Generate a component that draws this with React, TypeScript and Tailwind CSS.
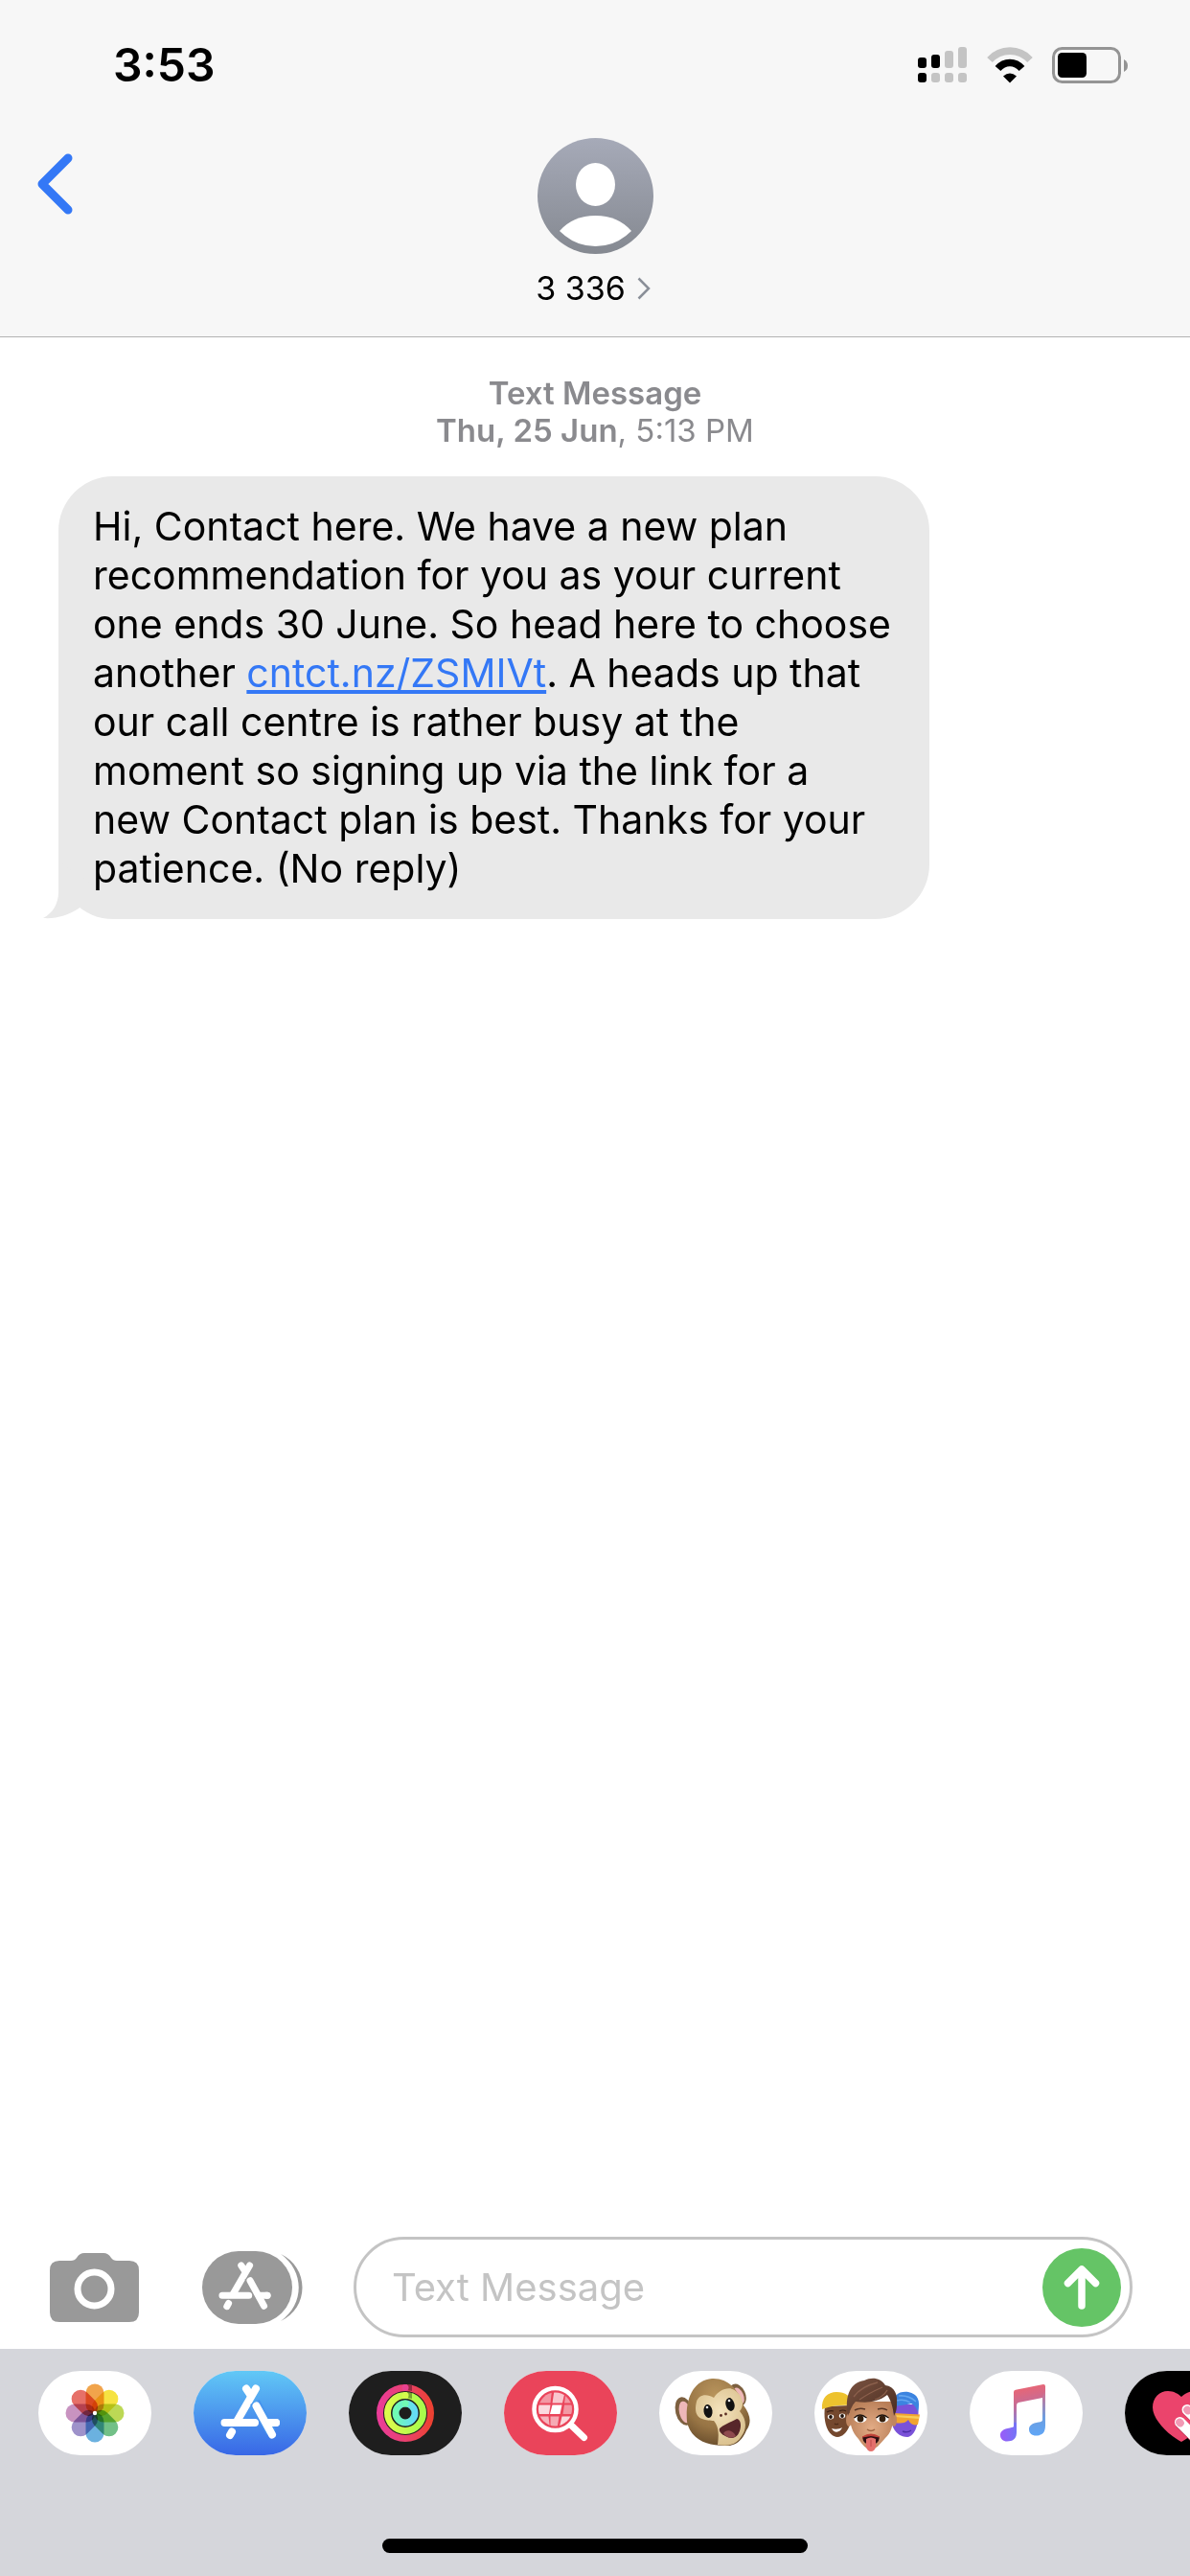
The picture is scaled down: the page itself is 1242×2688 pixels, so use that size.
import type { ReactNode } from 'react';

function StatusIcons() {
  return (
    <div className="flex items-center gap-5">
      <svg width="52" height="38" viewBox="0 0 52 38">
        <g fill="#c4c4c4">
          <rect x="14" y="27" width="9" height="10" rx="3" />
          <rect x="28" y="4" width="9" height="18" rx="3" />
          <rect x="28" y="27" width="9" height="10" rx="3" />
          <rect x="42" y="0" width="9" height="22" rx="3" />
          <rect x="42" y="27" width="9" height="10" rx="3" />
        </g>
        <rect x="0" y="11" width="9" height="11" rx="3" />
        <rect x="0" y="27" width="9" height="10" rx="3" />
        <rect x="14" y="8" width="9" height="14" rx="3" />
      </svg>
      <svg width="48" height="38" viewBox="0 0 48 38">
        <path d="M3 13.5C14.5 1 33.5 1 45 13.5" fill="none" stroke="#c4c4c4" strokeWidth="7.6" />
        <path d="M11.5 22.5C18.5 14.5 29.5 14.5 36.5 22.5" fill="none" stroke="#000" strokeWidth="7.6" />
        <path d="M17 30.5Q24 24.5 31 30.5L24 37.5Z" />
      </svg>
      <svg width="80" height="38" viewBox="0 0 80 38">
        <rect x="1.5" y="1.5" width="69" height="35" rx="9" fill="none" stroke="#949494" strokeWidth="3" />
        <rect x="6" y="6" width="30" height="26" rx="4.5" />
        <path d="M75 13Q79 15 79 19.5T75 26Z" fill="#949494" />
      </svg>
    </div>
  );
}

function StoreGlyph({ cut }: { cut: string }) {
  return (
    <g fill="none" strokeLinecap="round" strokeWidth="8">
      <path stroke="#fff" d="M4.5 40H36M56.5 40H58M27 4.5l4 6" />
      <path stroke="#fff" d="M37 4.5L17 39" />
      <path stroke="#fff" d="M12 49.5l-2 3.5" />
      <path stroke={cut} strokeWidth="11" strokeLinecap="butt" d="M36 18.5L53 50" />
      <path stroke="#fff" d="M37.5 22.5L54 52.5" />
      <path stroke="#fff" d="M50 40H58" />
    </g>
  );
}

const petals = ['#f09a37', '#f5e02e', '#b5d443', '#63b97a', '#5ba8dc', '#9486c4', '#c287b9', '#e36158'];

function PhotosIcon() {
  return (
    <svg className="h-full w-full" viewBox="0 0 118 88">
      <g className="isolate">
        {petals.map((color, i) => (
          <rect
            key={color}
            className="mix-blend-multiply"
            x="49.5"
            y="13.5"
            width="19"
            height="31"
            rx="9.5"
            fill={color}
            fillOpacity="0.9"
            transform={`rotate(${i * 45} 59 44)`}
          />
        ))}
      </g>
      <circle cx="59" cy="44" r="2.2" fill="#fff" />
    </svg>
  );
}

function StoreIcon() {
  return (
    <svg className="h-full w-full" viewBox="0 0 118 88">
      <defs>
        <linearGradient id="store" x1="0" y1="0" x2="0" y2="1">
          <stop offset="0" stopColor="#61c8f6" />
          <stop offset="1" stopColor="#3867e6" />
        </linearGradient>
      </defs>
      <rect width="118" height="88" fill="url(#store)" />
      <g transform="translate(28 14)">
        <StoreGlyph cut="#4795ee" />
      </g>
    </svg>
  );
}

function FitnessIcon() {
  return (
    <svg className="h-full w-full" viewBox="0 0 118 88">
      <defs>
        <linearGradient id="move" x1="0" x2="1">
          <stop offset="0" stopColor="#ea3c97" />
          <stop offset="0.5" stopColor="#e9416f" />
          <stop offset="1" stopColor="#ec4133" />
        </linearGradient>
        <linearGradient id="exercise" x1="0" x2="1">
          <stop offset="0" stopColor="#dcfb4c" />
          <stop offset="1" stopColor="#a8fb4c" />
        </linearGradient>
        <linearGradient id="stand" x1="0" x2="1">
          <stop offset="0" stopColor="#70fbb4" />
          <stop offset="1" stopColor="#65dcf5" />
        </linearGradient>
      </defs>
      <rect width="118" height="88" fill="#1e1e1e" />
      <g fill="none" strokeWidth="7">
        <circle cx="59" cy="44" r="26.5" stroke="url(#move)" />
        <circle cx="59" cy="44" r="18.5" stroke="url(#exercise)" />
        <circle cx="59" cy="44" r="10" stroke="url(#stand)" />
      </g>
      <path d="M61 14l5 1v6l-5-1zM61 22l5 1v6l-5-1z" fill="#000" fillOpacity="0.35" />
      <circle cx="59" cy="17.5" r="3.5" fill="#e8418f" />
      <circle cx="59" cy="25.5" r="3.5" fill="#d4fb4c" />
      <circle cx="59" cy="34" r="3.5" fill="#70fbb4" />
    </svg>
  );
}

function ImagesIcon() {
  return (
    <svg className="h-full w-full" viewBox="0 0 118 88">
      <defs>
        <clipPath id="lens">
          <circle cx="53.5" cy="40" r="17.5" />
        </clipPath>
      </defs>
      <rect width="118" height="88" fill="#ea445a" />
      <path d="M70 56.5L83.5 69.5" stroke="#fff" strokeWidth="7" strokeLinecap="round" />
      <circle cx="53.5" cy="40" r="22" fill="none" stroke="#fff" strokeWidth="4.5" />
      <g clipPath="url(#lens)" fill="#fff">
        <path opacity="0.45" d="M34 20H50L48.5 33.5H34z" />
        <path opacity="0.7" d="M52.5 20H64L61 33.5H50.5z" />
        <path opacity="0.45" d="M65 20H74V33.5H63z" />
        <path opacity="0.8" d="M34 35.5H48.5L47 45H34z" />
        <path d="M50.5 35.5H60.5L58.5 45H48z" />
        <path opacity="0.45" d="M63 35.5H74V45H61.5z" />
        <path opacity="0.6" d="M34 47.5H46.5L48 60H34z" />
        <path opacity="0.55" d="M48.5 47.5H57.5L55.5 60H48.5z" />
        <path opacity="0.8" d="M60.5 47.5H74V60H57.5z" />
      </g>
    </svg>
  );
}

function MonkeyIcon() {
  return (
    <svg className="h-full w-full" viewBox="0 0 118 88">
      <defs>
        <radialGradient id="fur" cx="0.45" cy="0.25" r="0.8">
          <stop offset="0" stopColor="#b8945c" />
          <stop offset="0.6" stopColor="#977444" />
          <stop offset="1" stopColor="#64492a" />
        </radialGradient>
        <radialGradient id="muzzle" cx="0.5" cy="0.4" r="0.7">
          <stop offset="0" stopColor="#f4e3bd" />
          <stop offset="1" stopColor="#d6bc88" />
        </radialGradient>
      </defs>
      <ellipse cx="26" cy="42" rx="9" ry="15" fill="#7d6040" transform="rotate(-14 26 42)" />
      <ellipse cx="27" cy="43" rx="6" ry="11.5" fill="#eeb7b8" transform="rotate(-14 27 43)" />
      <ellipse cx="82" cy="25" rx="8" ry="12" fill="#7d6040" transform="rotate(-24 82 25)" />
      <ellipse cx="83" cy="26" rx="5" ry="9" fill="#eeb7b8" transform="rotate(-24 83 26)" />
      <path
        d="M55 8C72 7 83 20 88 36C95 45 97 54 91 62C86 74 78 79 68 78C50 78 33 72 29 53C27 28 36 10 55 8Z"
        fill="url(#fur)"
      />
      <path
        d="M39 32C41 25 49 23 57 28C62 20 73 15 80 21C88 27 89 37 84 42C91 50 92 60 86 68C81 77 72 79 61 77C62 68 63 59 57 52C49 51 34 52 39 32Z"
        fill="url(#muzzle)"
      />
      <ellipse cx="51" cy="42" rx="4.5" ry="7" fill="#111" transform="rotate(-8 51 42)" />
      <ellipse cx="74" cy="35" rx="4.5" ry="7" fill="#111" transform="rotate(-14 74 35)" />
      <circle cx="50" cy="38" r="1.3" fill="#fff" />
      <circle cx="73" cy="31" r="1.3" fill="#fff" />
      <circle cx="64.5" cy="46.5" r="1.4" fill="#5b2d23" />
      <circle cx="69.5" cy="45" r="1.4" fill="#5b2d23" />
      <path
        d="M63 60C69 55 76 53 81 50C86 51 86 59 83 65C80 71 74 71 69 68C65 66 62 63 63 60Z"
        fill="#57262a"
      />
      <path d="M67 65C70 61 76 61 80 68C76 71 70 70 67 65Z" fill="#8f4a4e" />
    </svg>
  );
}

function MemojiIcon() {
  return (
    <svg className="h-full w-full" viewBox="0 0 118 88">
      <defs>
        <linearGradient id="hair" x1="0" y1="0" x2="1" y2="1">
          <stop offset="0" stopColor="#7b5341" />
          <stop offset="1" stopColor="#4a2d21" />
        </linearGradient>
        <radialGradient id="skin" cx="0.5" cy="0.55" r="0.6">
          <stop offset="0" stopColor="#e2ab85" />
          <stop offset="1" stopColor="#b97f58" />
        </radialGradient>
      </defs>
      {/* left: yellow beanie */}
      <path d="M11 37C9 52 13 68 24 69C35 68 40 54 38 36Z" fill="#74482e" />
      <path d="M8 40C7 28 14 22 23 22C32 22 39 26 39 36C29 35 17 36 8 40Z" fill="#edc22e" />
      <path d="M18 60C21 61 26 61 29 59C27 65 20 65 18 60Z" fill="#fff" />
      <ellipse cx="17" cy="48" rx="3.2" ry="2.4" fill="#fff" />
      <ellipse cx="29" cy="47" rx="3.2" ry="2.4" fill="#fff" />
      <circle cx="17" cy="48" r="1.9" fill="#20120b" />
      <circle cx="29" cy="47" r="1.9" fill="#20120b" />
      <path d="M13 43q4-2 7-1M26 42q4-2 7 0" fill="none" stroke="#3c2114" strokeWidth="1.2" />
      <path d="M21 55q2 1.500 4 0" fill="none" stroke="#4b2b1a" strokeWidth="1.2" />
      {/* right: blue hair and visor */}
      <path d="M82 35H108C110 52 106 68 97 69C88 69 81 62 80 50Z" fill="#7a52d8" />
      <path d="M80 38C82 25 88 21 98 22C108 24 111 31 108 43C106 38 104 35 101 34C94 36 86 36 80 38Z" fill="#3c84e0" />
      <path d="M88 26q10-1 18 6M86 31q8-2 14 2" fill="none" stroke="#65a7f0" strokeWidth="1.5" />
      <path d="M82 44L110 45.5L108 56Q101 58 98 51Q94 56 84 54Z" fill="#f2a42f" />
      <path d="M83 46L109 47.5L109 50L84 48Z" fill="#f8cd58" />
      <path d="M92 63q5 2 9-1" fill="none" stroke="#4d2fa8" strokeWidth="1.5" />
      {/* centre */}
      <ellipse cx="36" cy="51" rx="3" ry="7" fill="#c08660" />
      <ellipse cx="83" cy="51" rx="3" ry="7" fill="#c08660" />
      <path d="M37 32H82C83 49 83 62 74 70C68 77 64 82 59 82C54 82 50 77 46 71C37 62 36 50 37 32Z" fill="url(#skin)" />
      <path
        d="M35 47C31 25 38 12 52 10C60 6 69 7 74 15C84 16 87 25 86 35C86 42 84 45 83 47C82 38 80 31 76 25C65 34 52 33 43 32C39 36 37 42 35 47Z"
        fill="url(#hair)"
      />
      <path d="M41 27Q49 16 66 12M47 30Q57 23 71 17M63 30Q72 27 76 20" fill="none" stroke="#8b604c" strokeWidth="1.3" />
      <path d="M42 41q5-3 11-1M66 40q6-2 10 1" fill="none" stroke="#5a3828" strokeWidth="1.5" />
      <ellipse cx="48" cy="50" rx="6.5" ry="4" fill="#fff" />
      <ellipse cx="71" cy="50" rx="6.5" ry="4" fill="#fff" />
      <circle cx="48" cy="50" r="3.4" fill="#35200f" />
      <circle cx="71" cy="50" r="3.4" fill="#35200f" />
      <path d="M41.5 49q6-6 13 0M64.5 49q6-6 13 0" fill="none" stroke="#1d120c" strokeWidth="1.3" />
      <path d="M55 61q4 3 8 0" fill="none" stroke="#9c6342" strokeWidth="1.5" />
      <path d="M50 69Q59 64 68 69Q67 77 59 77Q51 77 50 69Z" fill="#2f1012" />
      <path d="M50 69Q59 63 68 69Q59 66 50 69Z" fill="#c2443a" stroke="#c2443a" />
      <path d="M54 71Q59 68 64 71V79Q63 84 59 84Q55 84 54 79Z" fill="#e4706c" />
      <path d="M59 72v7" stroke="#bf4a4a" strokeWidth="1" />
    </svg>
  );
}

function MusicIcon() {
  return (
    <svg className="h-full w-full" viewBox="0 0 118 88">
      <defs>
        <linearGradient id="music" gradientUnits="userSpaceOnUse" x1="50" y1="14" x2="63" y2="74">
          <stop offset="0" stopColor="#f1646c" />
          <stop offset="0.35" stopColor="#c66c96" />
          <stop offset="0.7" stopColor="#7b85e6" />
          <stop offset="1" stopColor="#5f8ff5" />
        </linearGradient>
        <linearGradient id="noteLeft" x1="0" y1="0" x2="1" y2="0">
          <stop offset="0" stopColor="#9a5cf8" />
          <stop offset="1" stopColor="#7474f6" />
        </linearGradient>
        <linearGradient id="noteRight" gradientUnits="userSpaceOnUse" x1="70" y1="20" x2="72" y2="68">
          <stop offset="0" stopColor="#dc6c86" />
          <stop offset="0.6" stopColor="#6d9ee0" />
          <stop offset="1" stopColor="#5fa6f7" />
        </linearGradient>
      </defs>
      <path d="M46 22Q46 20 48 19.7L77 14Q79 14 79 16V29L76 28L51 33Q49 33.5 49 36V60H46Z" fill="url(#music)" />
      <path d="M46 54V58Q46 58.5 42 59.5C35 60.5 32 63 32 67C32 71 35 73.5 39 73.5C46 73.5 49 70 49 64V54Z" fill="url(#noteLeft)" />
      <path
        d="M79 20V57C79 64 76 67.5 69 67.5C65 67.5 62 65 62 61C62 57 65 54.5 72 53.5Q76 53 76 51V28Z"
        fill="url(#noteRight)"
      />
    </svg>
  );
}

function TouchIcon() {
  return (
    <svg className="h-full w-full" viewBox="0 0 118 88">
      <rect width="118" height="88" fill="#000" />
      <path
        d="M59 74C44 66 29 50 29 38C29 28 36 21 45 21C51 21 56 24 59 27C62 24 67 21 73 21C82 21 89 28 89 38C89 50 74 66 59 74Z"
        fill="#eb446c"
      />
      <g strokeLinecap="round" strokeWidth="11">
        <path d="M58 55l16 16M65 41l16 16" stroke="#b92f50" />
        <path d="M57.5 53.5l18 18M65 40.5l18 18" stroke="#fff" />
      </g>
      <rect x="53.5" y="49.5" width="8" height="9" rx="4" fill="#f19ab5" transform="rotate(-40 57.5 54)" />
      <rect x="61.5" y="36.5" width="8" height="9" rx="4" fill="#f19ab5" transform="rotate(-40 65.5 41)" />
    </svg>
  );
}

const apps: { name: string; icon: ReactNode }[] = [
  { name: 'Photos', icon: <PhotosIcon /> },
  { name: 'App Store', icon: <StoreIcon /> },
  { name: 'Fitness', icon: <FitnessIcon /> },
  { name: 'Images', icon: <ImagesIcon /> },
  { name: 'Animoji', icon: <MonkeyIcon /> },
  { name: 'Memoji', icon: <MemojiIcon /> },
  { name: 'Music', icon: <MusicIcon /> },
  { name: 'Digital Touch', icon: <TouchIcon /> },
];

function Header() {
  return (
    <header className="border-b border-[#b2b2b2] bg-[#f7f7f7]">
      <div className="flex h-34 items-center justify-between pr-16 pl-[118px]">
        <span className="text-[48px] leading-none font-semibold">3:53</span>
        <StatusIcons />
      </div>
      <div className="grid grid-cols-3 items-start pt-2 pb-[30px]">
        <button aria-label="Back" className="justify-self-start p-4 pl-9">
          <svg width="42" height="64" viewBox="0 0 42 64">
            <path
              d="M35 5L8 32L35 59"
              fill="none"
              stroke="#3478f6"
              strokeWidth="9"
              strokeLinecap="round"
              strokeLinejoin="round"
            />
          </svg>
        </button>
        <button className="flex flex-col items-center gap-4 justify-self-center">
          <svg width="121" height="121" viewBox="0 0 121 121">
            <defs>
              <linearGradient id="avatar" x1="0" y1="0" x2="0" y2="1">
                <stop offset="0" stopColor="#a6aab8" />
                <stop offset="1" stopColor="#858991" />
              </linearGradient>
            </defs>
            <circle cx="60.5" cy="60.5" r="60.5" fill="url(#avatar)" />
            <ellipse cx="60.5" cy="48.5" rx="20.5" ry="22.5" fill="#fff" />
            <path d="M23 97Q37 81 60.5 81T98 97Q82 113 60.5 113T23 97Z" fill="#fff" />
          </svg>
          <span className="flex items-center gap-3 pr-1 text-[34px] leading-10">
            3 336
            <svg width="14" height="24" viewBox="0 0 14 24">
              <path d="M1.5 1.5L12 12L1.5 22.5" fill="none" stroke="#8a8f98" strokeWidth="2.5" />
            </svg>
          </span>
        </button>
      </div>
    </header>
  );
}

function Conversation() {
  return (
    <main className="flex-1 pt-[39px]">
      <p className="text-center text-[33px] leading-[39px] text-[#8a8a8e]">
        <span className="font-semibold">Text Message</span>
        <br />
        <span className="font-semibold">Thu, 25 Jun</span>, 5:13 PM
      </p>
      <div className="relative mt-7 ml-[61px] w-fit rounded-[57px] bg-[#e9e9e9] py-[27px] pr-10 pl-9">
        <svg className="absolute bottom-0 -left-4" width="60" height="60" viewBox="0 0 60 60">
          <path d="M16 0V32C16 44 10 54 0 59C14 60 26 56 37 49L60 30Z" fill="#e9e9e9" />
        </svg>
        <p className="relative text-[41px] leading-[51px]">
          Hi, Contact here. We have a new plan
          <br />
          recommendation for you as your current
          <br />
          one ends 30 June. So head here to choose
          <br />
          another{' '}
          <a href="#" className="text-[#3478f6] underline">
            cntct.nz/ZSMIVt
          </a>
          . A heads up that
          <br />
          our call centre is rather busy at the
          <br />
          moment so signing up via the link for a
          <br />
          new Contact plan is best. Thanks for your
          <br />
          patience. (No reply)
        </p>
      </div>
    </main>
  );
}

function Composer() {
  return (
    <form className="flex items-center pr-15 pb-3 pl-13" onSubmit={(e) => e.preventDefault()}>
      <button type="button" aria-label="Camera">
        <svg width="93" height="72" viewBox="0 0 93 72">
          <path
            d="M10 8H22Q26 8 28 5Q31 0 36 0H56Q61 0 64 5Q66 8 70 8H83Q93 8 93 18V62Q93 72 83 72H10Q0 72 0 62V18Q0 8 10 8Z"
            fill="#999"
          />
          <circle cx="46.5" cy="37.5" r="17.5" fill="none" stroke="#fff" strokeWidth="7" />
        </svg>
      </button>
      <button type="button" aria-label="Apps" className="ml-[66px]">
        <svg width="105" height="76" viewBox="0 0 105 76">
          <rect width="94" height="76" rx="38" fill="#999" />
          <path d="M82 3C112 17 112 59 82 73C107 55 107 21 82 3Z" fill="#999" />
          <g transform="translate(17 11) scale(0.88)">
            <StoreGlyph cut="#999" />
          </g>
        </svg>
      </button>
      <div className="ml-[53px] flex h-[105px] flex-1 items-center rounded-full border-3 border-[#c4c4c4] pr-[9px] pl-[37px]">
        <input
          type="text"
          aria-label="Text Message"
          placeholder="Text Message"
          className="min-w-0 flex-1 text-[40px] outline-none placeholder:text-[#c4c4c4]"
        />
        <button type="submit" aria-label="Send" className="grid size-[82px] place-items-center rounded-full bg-[#65c466]">
          <svg width="38" height="46" viewBox="0 0 38 46">
            <path
              d="M19 42V5M4.5 18.5L19 4L33.5 18.5"
              fill="none"
              stroke="#fff"
              strokeWidth="7.5"
              strokeLinecap="round"
              strokeLinejoin="round"
            />
          </svg>
        </button>
      </div>
    </form>
  );
}

export default function App() {
  return (
    <div className="flex min-h-screen flex-col overflow-hidden bg-white font-['Inter',sans-serif] text-black">
      <Header />
      <Conversation />
      <Composer />
      <footer className="flex flex-col bg-[#d5d6db] pt-[23px] pb-6">
        <nav className="flex gap-11 overflow-hidden pl-10">
          {apps.map((app) => (
            <button
              key={app.name}
              aria-label={app.name}
              className="h-[88px] w-[118px] shrink-0 overflow-hidden rounded-full bg-white"
            >
              {app.icon}
            </button>
          ))}
        </nav>
        {/* home indicator */}
        <div className="mt-[87px] h-[15px] w-[444px] self-center rounded-full bg-black" />
      </footer>
    </div>
  );
}
